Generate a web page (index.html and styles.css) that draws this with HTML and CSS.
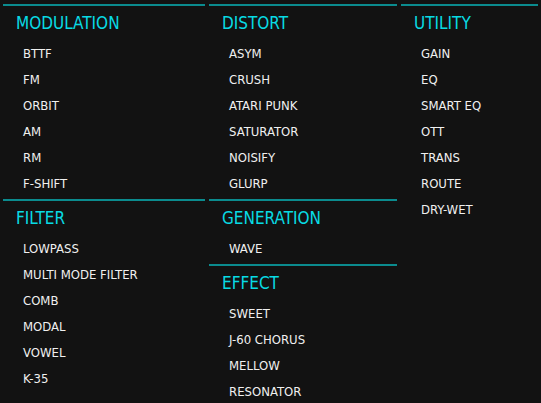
FILE: index.html
```html
<!DOCTYPE html>
<html>
<head>
<meta charset="utf-8">
<link rel="stylesheet" href="styles.css">
</head>
<body>
<div class="browser">
  <div class="col col-1">
    <section class="group">
      <h2 class="group-title">MODULATION</h2>
      <ul class="items">
        <li>BTTF</li><li>FM</li><li>ORBIT</li><li>AM</li><li>RM</li><li>F-SHIFT</li>
      </ul>
    </section>
    <section class="group">
      <h2 class="group-title">FILTER</h2>
      <ul class="items">
        <li>LOWPASS</li><li>MULTI MODE FILTER</li><li>COMB</li><li>MODAL</li><li>VOWEL</li><li>K-35</li>
      </ul>
    </section>
  </div>
  <div class="col col-2">
    <section class="group">
      <h2 class="group-title">DISTORT</h2>
      <ul class="items">
        <li>ASYM</li><li>CRUSH</li><li>ATARI PUNK</li><li>SATURATOR</li><li>NOISIFY</li><li>GLURP</li>
      </ul>
    </section>
    <section class="group">
      <h2 class="group-title">GENERATION</h2>
      <ul class="items">
        <li>WAVE</li>
      </ul>
    </section>
    <section class="group">
      <h2 class="group-title">EFFECT</h2>
      <ul class="items">
        <li>SWEET</li><li>J-60 CHORUS</li><li>MELLOW</li><li>RESONATOR</li>
      </ul>
    </section>
  </div>
  <div class="col col-3">
    <section class="group">
      <h2 class="group-title">UTILITY</h2>
      <ul class="items">
        <li>GAIN</li><li>EQ</li><li>SMART EQ</li><li>OTT</li><li>TRANS</li><li>ROUTE</li><li>DRY-WET</li>
      </ul>
    </section>
  </div>
</div>
</body>
</html>
```

FILE: styles.css
```css
html, body {
  margin: 0;
  padding: 0;
  background: #121212;
  height: 100%;
  overflow: hidden;
}

.browser {
  display: flex;
  gap: 4px;
  padding: 4px 0 0 3px;
  font-family: "DejaVu Sans Condensed", "DejaVu Sans", sans-serif;
  font-stretch: condensed;
}

.col {
  display: flex;
  flex-direction: column;
  gap: 2px;
}

.col-1 { width: 202px; }
.col-2 { width: 188px; }
.col-3 { width: 137px; }

.group {
  border-top: 2px solid #0b8b8e;
}

.group-title {
  margin: 0;
  padding: 1px 0 0 13px;
  height: 31px;
  line-height: 32px;
  font-size: 17px;
  font-weight: normal;
  color: #08dbe4;
}

.items {
  list-style: none;
  margin: 0;
  padding: 3px 0 0 20px;
}

.items li {
  height: 26px;
  line-height: 26px;
  font-size: 13px;
  color: #f0f0f0;
}
```
